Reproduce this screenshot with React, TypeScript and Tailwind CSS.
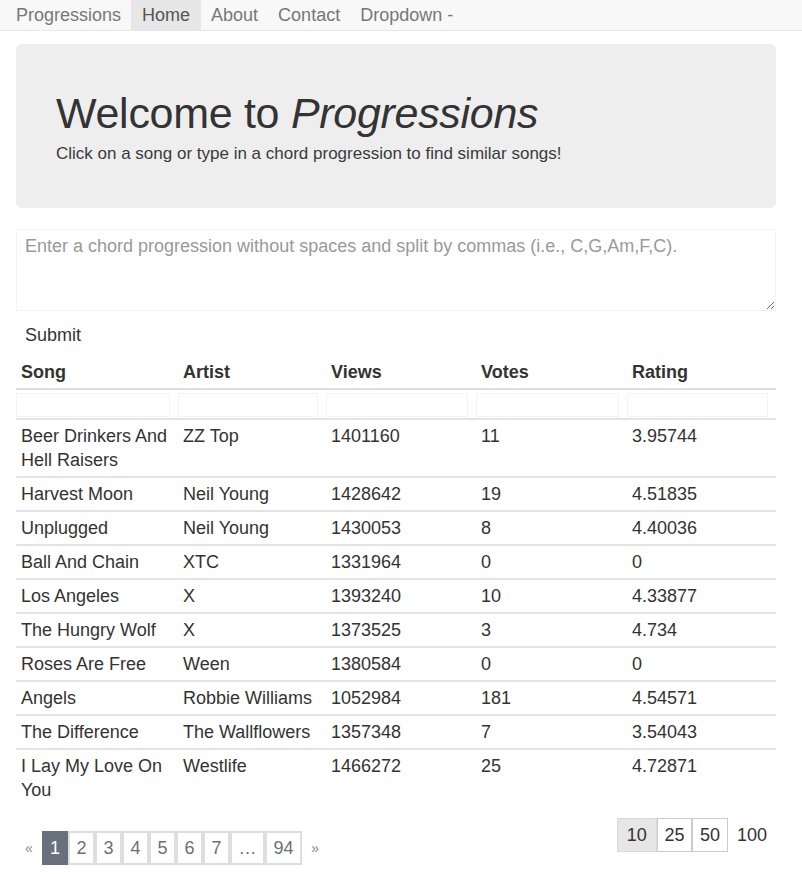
import React from "react";

type Song = {
  song: string;
  artist: string;
  views: string;
  votes: string;
  rating: string;
};

const songs: Song[] = [
  { song: "Beer Drinkers And Hell Raisers", artist: "ZZ Top", views: "1401160", votes: "11", rating: "3.95744" },
  { song: "Harvest Moon", artist: "Neil Young", views: "1428642", votes: "19", rating: "4.51835" },
  { song: "Unplugged", artist: "Neil Young", views: "1430053", votes: "8", rating: "4.40036" },
  { song: "Ball And Chain", artist: "XTC", views: "1331964", votes: "0", rating: "0" },
  { song: "Los Angeles", artist: "X", views: "1393240", votes: "10", rating: "4.33877" },
  { song: "The Hungry Wolf", artist: "X", views: "1373525", votes: "3", rating: "4.734" },
  { song: "Roses Are Free", artist: "Ween", views: "1380584", votes: "0", rating: "0" },
  { song: "Angels", artist: "Robbie Williams", views: "1052984", votes: "181", rating: "4.54571" },
  { song: "The Difference", artist: "The Wallflowers", views: "1357348", votes: "7", rating: "3.54043" },
  { song: "I Lay My Love On You", artist: "Westlife", views: "1466272", votes: "25", rating: "4.72871" },
];

const columns = ["Song", "Artist", "Views", "Votes", "Rating"];
const pages = ["2", "3", "4", "5", "6", "7", "…", "94"];

const Navbar: React.FC = () => (
  <nav className="h-[31px] bg-[#f8f8f8] border-b border-[#e7e7e7]">
    <div className="flex h-[30px] items-center pl-4 text-[18px] leading-[30px] text-[#777]">
      <span className="pr-[10px]">Progressions</span>
      <span className="px-[11px] bg-[#e7e7e7] text-[#555]">Home</span>
      <span className="px-[10px]">About</span>
      <span className="px-[10px]">Contact</span>
      <span className="px-[10px]">Dropdown -</span>
    </div>
  </nav>
);

const Jumbotron: React.FC = () => (
  <div className="mt-[13px] rounded-md bg-[#eeeeee] px-10 pt-[45px] pb-[42px] text-[#333]">
    <h1 className="text-[43px] leading-[48px] tracking-[-0.3px]">
      Welcome to <em>Progressions</em>
    </h1>
    <p className="mt-[5px] text-[17px] leading-[24px] text-[#3a3a3a]">
      Click on a song or type in a chord progression to find similar songs!
    </p>
  </div>
);

const SongTable: React.FC = () => (
  <table className="mt-[9px] w-full table-fixed border-collapse text-[18px] leading-[24px] text-[#333]">
    <colgroup>
      <col className="w-[162px]" />
      <col className="w-[148px]" />
      <col className="w-[150px]" />
      <col className="w-[151px]" />
      <col className="w-[149px]" />
    </colgroup>
    <thead>
      <tr className="border-b-2 border-[#dddddd]">
        {columns.map((c) => (
          <th key={c} className="px-[5px] py-1 text-left font-bold">
            {c}
          </th>
        ))}
      </tr>
      <tr className="border-b-2 border-[#e3e3e3]">
        {columns.map((c) => (
          <td key={c} className="px-[0px] pt-[3px] pb-[1px]">
            <div className="mr-[8px] h-[24px] border border-[#f4f4f4]" />
          </td>
        ))}
      </tr>
    </thead>
    <tbody>
      {songs.map((s, i) => (
        <tr key={s.song} className={i > 0 ? "border-t-2 border-[#e3e3e3]" : ""}>
          <td className="px-[5px] py-1 align-top">{s.song}</td>
          <td className="px-[5px] py-1 align-top">{s.artist}</td>
          <td className="px-[5px] py-1 align-top">{s.views}</td>
          <td className="px-[5px] py-1 align-top">{s.votes}</td>
          <td className="px-[5px] py-1 align-top">{s.rating}</td>
        </tr>
      ))}
    </tbody>
  </table>
);

const Pagination: React.FC = () => (
  <div className="mt-[25px] flex text-[18px] leading-[24px]">
    <span className="w-[26px] py-[5px] text-center text-[14px] text-[#888]">«</span>
    <span className="border-2 border-[#68717b] bg-[#68717b] px-[6px] py-[3px] text-white">1</span>
    {pages.map((p) => (
      <span key={p} className="border-2 border-[#dedede] bg-white px-[6.5px] py-[3px] text-[#68717b]">
        {p}
      </span>
    ))}
    <span className="w-[26px] py-[5px] text-center text-[14px] text-[#888]">»</span>
  </div>
);

const PageSize: React.FC = () => (
  <div className="mt-[12px] flex text-[18px] leading-[24px] text-[#333]">
    <span className="border border-[#dadada] bg-[#e6e6e6] px-[9px] py-[4px]">10</span>
    <span className="border border-[#cccccc] bg-white px-[6.5px] py-[4px]">25</span>
    <span className="border border-[#cccccc] bg-white px-[7px] py-[4px]">50</span>
    <span className="px-[9px] py-[5px]">100</span>
  </div>
);

export default function App() {
  return (
    <div className="min-h-screen bg-white font-['Liberation_Sans',Arial,sans-serif] text-[#333]">
      <Navbar />
      <div className="pl-4 pr-[26px]">
        <Jumbotron />
        <textarea
          className="mt-[21px] block h-[82px] w-full border border-[#f3f3f3] px-[8px] py-[4px] text-[18px] leading-[24px] text-[#333] placeholder:text-[#999] outline-none"
          placeholder="Enter a chord progression without spaces and split by commas (i.e., C,G,Am,F,C)."
        />
        <button className="mt-[12px] block px-[9px] text-[18px] leading-[24px] text-[#333]">Submit</button>
        <SongTable />
        <div className="flex items-start justify-between">
          <Pagination />
          <PageSize />
        </div>
      </div>
    </div>
  );
}
